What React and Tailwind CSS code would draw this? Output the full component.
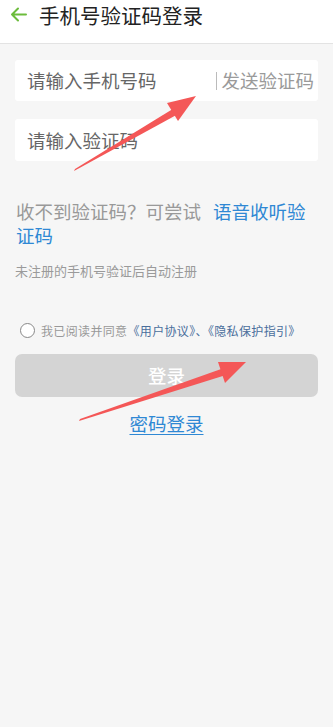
import React from 'react';

const font = { fontFamily: '"Noto Sans CJK SC", "Noto Sans", sans-serif' };

const Arrow = ({ d, head }) => (
  <g fill="#f45757">
    <path d={d} />
    <path d={head} />
  </g>
);

const App = () => {
  return (
    <div className="relative w-[333px] h-[727px] bg-[#f6f6f6] overflow-hidden" style={font}>
      <div className="h-[44px] bg-white border-b border-[#e3e3e3] flex items-center">
        <svg className="ml-[10px] mt-[-14px]" width="17" height="15" viewBox="0 0 17 15" fill="none">
          <path d="M16 7.5H2M8 1.5L2 7.5L8 13.5" stroke="#6cbc3c" strokeWidth="2" strokeLinecap="round" strokeLinejoin="round" />
        </svg>
        <h1 className="ml-[12px] mt-[-13px] text-[20.5px] leading-none text-[#222]">手机号验证码登录</h1>
      </div>

      <div className="px-[15px] pt-[16px]">
        <div className="h-[41px] bg-white rounded-[3px] flex items-center pl-[12px] pr-[4px]">
          <span className="flex-1 text-[18.5px] text-[#666] leading-none">请输入手机号码</span>
          <span className="w-px h-[18px] bg-[#bbb] mr-[4px]" />
          <span className="text-[18.5px] text-[#9a9a9a] leading-none">发送验证码</span>
        </div>
        <div className="mt-[18px] h-[42px] bg-white rounded-[3px] flex items-center pl-[12px]">
          <span className="text-[18.5px] text-[#666] leading-none">请输入验证码</span>
        </div>

        <p className="mt-[38px] pl-px text-[18.5px] leading-[24px] text-[#999]">
          收不到验证码？可尝试<span className="pl-[12px] text-[#2f88d4]">语音收听验证码</span>
        </p>

        <p className="mt-[15px] text-[13px] leading-[18px] text-[#9a9a9a]">未注册的手机号验证后自动注册</p>

        <div className="mt-[43px] flex items-center pl-[5px] text-[12px] tracking-[0.35px] leading-none">
          <span className="w-[15px] h-[15px] rounded-full border border-[#888] bg-white" />
          <span className="ml-[6px] text-[#999]">我已阅读并同意</span>
          <span className="text-[#4a6e9c]">《用户协议》、《隐私保护指引》</span>
        </div>

        <button className="mt-[16px] w-full h-[43px] rounded-[7px] bg-[#d4d4d4] text-white text-[18.5px] font-medium">
          登录
        </button>

        <div className="mt-[15px] text-center">
          <span className="text-[18.5px] leading-none text-[#2f88d4] underline underline-offset-[3px]">密码登录</span>
        </div>
      </div>

      <svg className="absolute left-0 top-0 pointer-events-none" width="333" height="727">
        <Arrow
          d="M74 171 L75 169 L176 107 L180 113 Z"
          head="M196 96 L167 103 L178 121 Z"
        />
        <Arrow
          d="M79 421 L80 419 L224 368 L226 375 Z"
          head="M246 362 L218 362 L225 383 Z"
        />
      </svg>
    </div>
  );
};

export default App;
